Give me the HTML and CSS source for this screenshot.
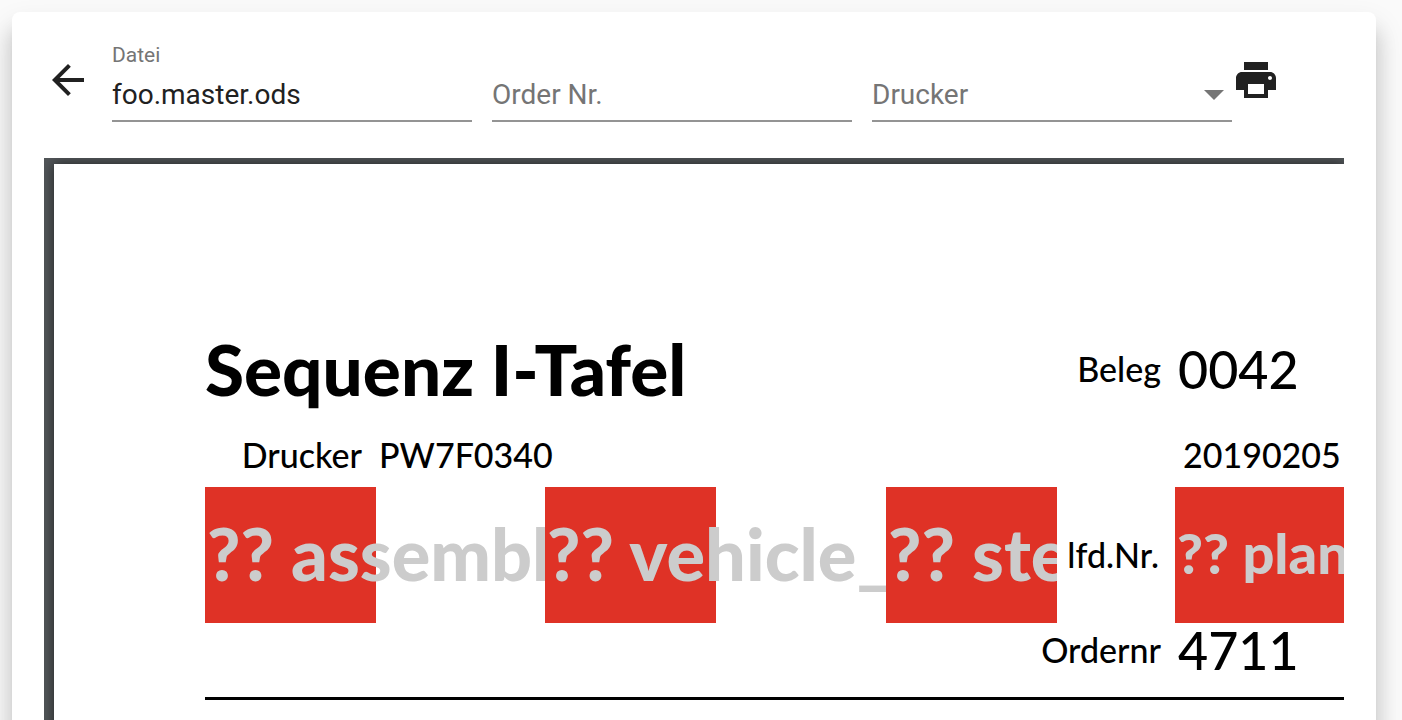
FILE: index.html
```html
<!DOCTYPE html>
<html lang="de">
<head>
<meta charset="utf-8">
<title>Sequenz I-Tafel</title>
<link rel="stylesheet" href="styles.css">
</head>
<body>
<main class="card">
  <form class="toolbar">
    <button class="icon-button back" type="button" aria-label="Zurück">
      <svg viewBox="0 0 24 24"><path d="M20 11H7.830l5.590-5.590L12 4l-8 8 8 8 1.410-1.410L7.830 13H20v-2z"/></svg>
    </button>
    <div class="field">
      <label class="field-label" for="file">Datei</label>
      <input class="control" id="file" type="text" value="foo.master.ods">
    </div>
    <div class="field">
      <input class="control" type="text" placeholder="Order Nr." aria-label="Order Nr.">
    </div>
    <div class="field field-select">
      <select class="control placeholder" aria-label="Drucker">
        <option>Drucker</option>
      </select>
    </div>
    <button class="icon-button" type="button" aria-label="Drucken">
      <svg viewBox="0 0 24 24"><path d="M19 8H5c-1.660 0-3 1.340-3 3v6h4v4h12v-4h4v-6c0-1.660-1.340-3-3-3zm-3 11H8v-5h8v5zm3-7c-.550 0-1-.450-1-1s.450-1 1-1 1 .450 1 1-.450 1-1 1zm-1-9H6v4h12V3z"/></svg>
    </button>
  </form>
  <section class="viewer">
    <article class="sheet">
      <h1 class="title">Sequenz I-Tafel</h1>
      <div class="label beleg">Beleg</div>
      <div class="value large">0042</div>
      <div class="label printer">Drucker</div>
      <div class="value printer-id">PW7F0340</div>
      <div class="value date">20190205</div>
      <div class="slot wide"><div class="missing">?? assembly</div></div>
      <div class="slot wide"><div class="missing">?? vehicle_id</div></div>
      <div class="slot"><div class="missing">?? steering</div></div>
      <div class="label serial">lfd.Nr.</div>
      <div class="slot"><div class="missing plan">?? plant</div></div>
      <div class="label order">Ordernr</div>
      <div class="value large">4711</div>
      <hr class="rule">
    </article>
  </section>
</main>
</body>
</html>
```
FILE: styles.css
```css
* {
  box-sizing: border-box;
}

body {
  margin: 0;
  height: 100vh;
  padding: 12px 26px 0 12px;
  overflow: hidden;
  background: #fafafa;
  color: #212121;
  font-family: Roboto, sans-serif;
}

.card {
  display: flex;
  flex-direction: column;
  min-height: 110vh;
  padding: 32px;
  border-radius: 8px;
  background: #fff;
  box-shadow: 0 10px 10px -6px rgba(0, 0, 0, 0.1),
    0 20px 20px 2px rgba(0, 0, 0, 0.12),
    0 16px 28px 4px rgba(0, 0, 0, 0.1);
}

.toolbar {
  display: flex;
  align-items: flex-end;
  margin-bottom: 36px;
}

.icon-button {
  flex: none;
  align-self: flex-start;
  width: 48px;
  height: 48px;
  margin-top: 12px;
  padding: 0;
  border: 0;
  background: none;
  color: inherit;
}

.icon-button svg {
  display: block;
  fill: currentColor;
}

.back {
  margin-right: 20px;
}

.field {
  position: relative;
  display: flex;
  flex: 0 1 360px;
  flex-direction: column;
  min-width: 0;
}

.field + .field {
  margin-left: 20px;
}

.field-label {
  margin-bottom: 12px;
  color: #757575;
  font-size: 21px;
  line-height: 22px;
}

.control {
  width: 100%;
  height: 44px;
  padding: 0 0 10px;
  border: 0;
  border-bottom: 2px solid #949494;
  border-radius: 0;
  outline: 0;
  appearance: none;
  background: none;
  color: inherit;
  font: 28px/32px Roboto, sans-serif;
}

.control::placeholder,
.placeholder {
  color: #757575;
  opacity: 1;
}

.field-select .control {
  padding-bottom: 8px;
}

.field-select::after {
  content: "";
  position: absolute;
  right: 8px;
  bottom: 22px;
  border: 10px solid transparent;
  border-top-color: #757575;
  border-bottom: 0;
  pointer-events: none;
}

.viewer {
  display: flex;
  flex: 1;
  padding: 6px 0 0 10px;
  overflow: hidden;
  background: #525659;
}

.sheet {
  display: grid;
  flex: 1;
  grid-template-columns: 171px 169px 171px 170px 171px 118px minmax(0, 1fr);
  grid-template-rows: 108px 64px 136px 54px 23px;
  align-content: start;
  align-items: center;
  min-width: 0;
  padding: 151px 0 0 151px;
  background: #fff;
  box-shadow: 0 0 12px rgba(0, 0, 0, 0.6);
  color: #000;
  font: 500 34px/48px Lato, sans-serif;
  white-space: nowrap;
}

.title {
  grid-column: 1 / 5;
  margin: 0;
  font-size: 71px;
  font-weight: 900;
  line-height: 80px;
}

.label {
  padding-right: 14px;
  text-align: right;
}

.beleg {
  grid-column: 5 / 7;
}

.order {
  grid-column: 1 / 7;
}

.serial {
  padding-right: 16px;
}

.value {
  padding-left: 3px;
}

.large {
  font-size: 52px;
}

.printer-id {
  grid-column: 2 / 7;
}

.date {
  padding-left: 8px;
  overflow: hidden;
}

.slot {
  overflow: hidden;
}

.wide {
  grid-column: span 2;
}

.missing {
  width: 171px;
  height: 136px;
  padding-left: 2px;
  background: #df3226;
  color: #ccc;
  font-size: 72px;
  font-weight: 900;
  line-height: 132px;
}

.plan {
  font-size: 56px;
}

.rule {
  grid-column: 1 / -1;
  align-self: end;
  width: 100%;
  height: 3px;
  margin: 0;
  border: 0;
  background: #000;
}
```
